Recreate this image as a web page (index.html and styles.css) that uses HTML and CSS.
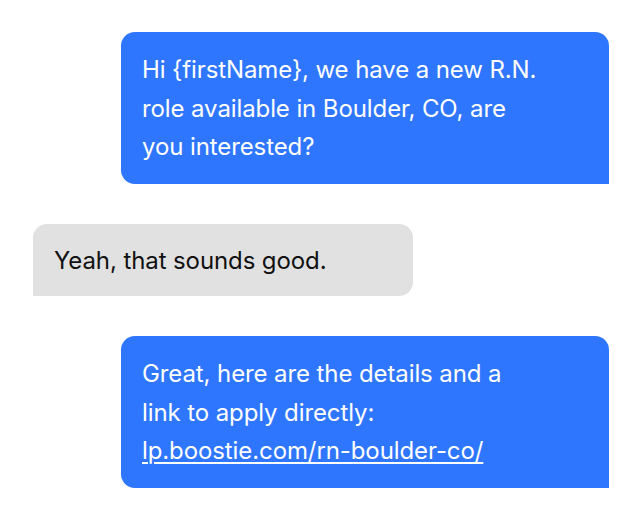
FILE: index.html
```html
<!DOCTYPE html>
<html>
<head>
<meta charset="utf-8">
<link rel="stylesheet" href="styles.css">
</head>
<body>
<div class="chat">
  <div class="bubble out">Hi {firstName}, we have a new R.N. role available in Boulder, CO, are you interested?</div>
  <div class="bubble in">Yeah, that sounds good.</div>
  <div class="bubble out">Great, here are the details and a link to apply directly: <a class="link" href="#">lp.boostie.com/rn-boulder-co/</a></div>
</div>
</body>
</html>
```
FILE: styles.css
```css
html, body {
  margin: 0;
  padding: 0;
  background: #ffffff;
}
.chat {
  display: flex;
  flex-direction: column;
  gap: 40px;
  padding: 32px 32px 0 33px;
  font-family: "Inter", "Liberation Sans", sans-serif;
  font-size: 24px;
  line-height: 38.5px;
  letter-spacing: -0.1px;
}
.bubble {
  box-sizing: border-box;
  padding: 19px 72px 17px 21px;
}
.out {
  align-self: flex-end;
  width: 488px;
  background: #2f76ff;
  color: #ffffff;
  border-radius: 14px 14px 0 14px;
}
.in {
  align-self: flex-start;
  width: 380px;
  background: #e1e1e1;
  color: #111111;
  border-radius: 14px 14px 14px 0;
  padding: 18px 20px 16px 21px;
}
.link {
  color: #ffffff;
  text-decoration: underline;
  text-underline-offset: 3px;
  text-decoration-thickness: 1.5px;
  white-space: nowrap;
}
```
